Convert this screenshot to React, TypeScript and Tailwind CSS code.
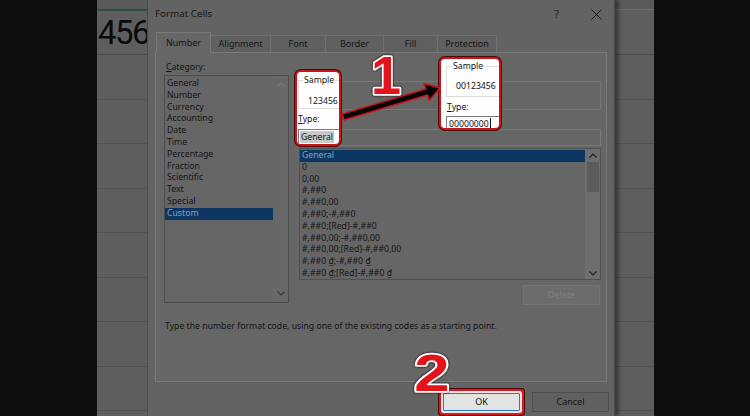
import React from "react";

const categories = [
  "General",
  "Number",
  "Currency",
  "Accounting",
  "Date",
  "Time",
  "Percentage",
  "Fraction",
  "Scientific",
  "Text",
  "Special",
  "Custom",
];

const formats = [
  "General",
  "0",
  "0,00",
  "#,##0",
  "#,##0,00",
  "#,##0;-#,##0",
  "#,##0;[Red]-#,##0",
  "#,##0,00;-#,##0,00",
  "#,##0,00;[Red]-#,##0,00",
  "#,##0 ₫;-#,##0 ₫",
  "#,##0 ₫;[Red]-#,##0 ₫",
];

const tabs = [
  { label: "Number", w: "w-[55px]" },
  { label: "Alignment", w: "w-[60px]" },
  { label: "Font", w: "w-[55px]" },
  { label: "Border", w: "w-[58px]" },
  { label: "Fill", w: "w-[54px]" },
  { label: "Protection", w: "w-[59px]" },
];

function ChevronUp({ color }: { color: string }) {
  return (
    <svg width="8" height="5" viewBox="0 0 8 5">
      <path d="M0.5 4.5 L4 1 L7.5 4.5" fill="none" stroke={color} strokeWidth="1.2" />
    </svg>
  );
}

function ChevronDown({ color }: { color: string }) {
  return (
    <svg width="8" height="5" viewBox="0 0 8 5">
      <path d="M0.5 0.5 L4 4 L7.5 0.5" fill="none" stroke={color} strokeWidth="1.2" />
    </svg>
  );
}

function Sheet() {
  return (
    <div className="flex flex-col">
      <div className="h-[9px] bg-[#5a5a5a]" />
      <div className="flex h-[46px] border-b border-[#4c4c4c]">
        <div className="w-[52px] border-t-2 border-[#2d4f3f] overflow-hidden">
          <div className="pl-[1px] pt-[5px] font-['Roboto',sans-serif] text-[33px] leading-none tracking-[-1.5px] text-[#0a0a0a]">
            456
          </div>
        </div>
        <div className="flex-1 border-t border-[#6c6c6c]" />
      </div>
      {Array.from({ length: 8 }).map((_, i) => (
        <div key={i} className="h-[44.5px] border-b border-[#515151]" />
      ))}
    </div>
  );
}

function Dialog() {
  return (
    <div className="absolute left-[50px] top-0 w-[468px] h-[416px] bg-[#636363] border-x border-[#4b4b4b] shadow-[4px_0_3px_rgba(0,0,0,0.35)] flex flex-col text-[8.7px] text-[#151515]">
      {/* title bar */}
      <div className="h-[28px] flex items-center pl-[7px] pr-[12px]">
        <span className="text-[9.8px]">Format Cells</span>
        <span className="ml-auto mr-[32px] text-[11px] text-[#1c1c1c]">?</span>
        <svg width="11" height="11" viewBox="0 0 11 11">
          <path d="M0.5 0.5 L10.5 10.5 M10.5 0.5 L0.5 10.5" stroke="#1a1a1a" strokeWidth="1" />
        </svg>
      </div>

      {/* tabs */}
      <div className="mt-[4px] ml-[8px] h-[20px] flex items-end">
        {tabs.map((t, i) =>
          i === 0 ? (
            <div
              key={t.label}
              className={`${t.w} h-[21px] -mb-px relative z-10 bg-[#666666] border-x border-t border-[#787878] flex items-center justify-center text-[9px]`}
            >
              {t.label}
            </div>
          ) : (
            <div
              key={t.label}
              className={`${t.w} h-[17px] bg-[#606060] border-t border-r border-[#707070] flex items-center justify-center text-[9px]`}
            >
              {t.label}
            </div>
          )
        )}
      </div>

      {/* panel */}
      <div className="mx-[7px] h-[330px] bg-[#666666] border border-[#787878] pt-[8px] pl-[8px] flex flex-col">
        <div className="flex">
          {/* category column */}
          <div className="w-[125px] flex flex-col">
            <div className="h-[14px] leading-[12px] pl-[2px]">
              <span className="underline">C</span>ategory:
            </div>
            <div className="h-[228px] border border-[#4d4d4d] flex">
              <div className="flex-1 pt-[2px]">
                {categories.map((c) => (
                  <div
                    key={c}
                    className={
                      c === "Custom"
                        ? "h-[11.8px] leading-[11.8px] pl-[2px] bg-[#0c3763] text-[#8ea0b8]"
                        : "h-[11.8px] leading-[11.8px] pl-[2px]"
                    }
                  >
                    {c}
                  </div>
                ))}
              </div>
              <div className="w-[15px] flex flex-col items-center justify-between py-[6px] bg-[#686868]">
                <ChevronUp color="#7a7a7a" />
                <ChevronDown color="#3a3a3a" />
              </div>
            </div>
          </div>

          {/* right column */}
          <div className="ml-[10px] w-[302px] flex flex-col">
            <div className="mt-[20px] h-[29px] border border-[#767676] relative">
              <span className="absolute left-[4px] -top-[7px] px-[1px] bg-[#666666] leading-[12px]">Sample</span>
            </div>
            <div className="mt-[4px] h-[12px] leading-[12px]">
              <span className="underline">T</span>ype:
            </div>
            <div className="mt-[3px] h-[17px] border border-[#7a7a7a]" />
            <div className="mt-[2px] h-[132px] border border-[#4f4f4f] flex">
              <div className="flex-1 pt-[1px]">
                {formats.map((f) => (
                  <div
                    key={f}
                    className={
                      f === "General"
                        ? "h-[11.8px] leading-[11.8px] pl-[2px] bg-[#0c3763] text-[#8ea0b8]"
                        : "h-[11.8px] leading-[11.8px] pl-[2px] whitespace-nowrap"
                    }
                  >
                    {f}
                  </div>
                ))}
              </div>
              <div className="w-[15px] bg-[#6e6e6e] flex flex-col items-center">
                <div className="h-[12px] flex items-center">
                  <ChevronUp color="#1e1e1e" />
                </div>
                <div className="w-[12px] h-[30px] mt-[1px] bg-[#5b5b5b]" />
                <div className="flex-1" />
                <div className="h-[12px] flex items-center">
                  <ChevronDown color="#1e1e1e" />
                </div>
              </div>
            </div>
            <div className="mt-[5px] self-end mr-[1px] w-[77px] h-[20px] bg-[#6c6c6c] border border-[#747474] flex items-center justify-center text-[#7f7f7f] text-[9px]">
              Delete
            </div>
          </div>
        </div>
        <div className="mt-[15px] pl-[1px] leading-[12px] whitespace-nowrap">
          Type the number format code, using one of the existing codes as a starting point.
        </div>
      </div>

      {/* buttons */}
      <div className="mt-[10px] flex justify-end gap-[12px] pr-[5px]">
        <div className="mt-[1px] w-[77px] h-[18px] bg-[#e3e3e3] border border-[#2d79c9] rounded-[1px] shadow-[0_0_0_2px_#f5e3e3,0_0_0_4px_#d21d27,0_0_0_5px_#4a0c0c] flex items-center justify-center text-[9px] text-[#111]">
          OK
        </div>
        <div className="w-[77px] h-[20px] bg-[#606060] border border-[#4f4f4f] flex items-center justify-center text-[9px]">
          Cancel
        </div>
      </div>
    </div>
  );
}

function Callouts() {
  return (
    <>
      {/* left callout */}
      <div className="absolute left-[295px] top-[70px] w-[46px] h-[76px] bg-white border-2 border-[#c8141d] rounded-[6px] shadow-[0_0_0_1px_#4a0a0a] overflow-hidden text-[8.7px] text-[#111]">
        <div className="pl-[1px] pt-[8px] flex flex-col w-[300px]">
          <div className="h-[29px] border border-[#dcdcdc] relative">
            <span className="absolute left-[4px] -top-[7px] px-[1px] bg-white leading-[12px]">Sample</span>
            <div className="pl-[9px] pt-[14px] leading-[12px]">123456</div>
          </div>
          <div className="mt-[4px] h-[12px] leading-[12px]">
            <span className="underline">T</span>ype:
          </div>
          <div className="mt-[4px] h-[16px] border border-[#7a7a7a] pl-[1px] pt-[1px]">
            <span className="bg-[#c9c9c9] leading-[12px] px-[1px]">General</span>
          </div>
        </div>
      </div>

      {/* right callout */}
      <div className="absolute left-[439px] top-[57px] w-[62px] h-[73px] bg-white border-2 border-[#c8141d] rounded-[6px] shadow-[0_0_0_1px_#4a0a0a] overflow-hidden text-[8.7px] text-[#111]">
        <div className="pl-[5px] pt-[7px] flex flex-col w-[300px]">
          <div className="h-[31px] border border-[#dcdcdc] relative">
            <span className="absolute left-[5px] -top-[7px] px-[1px] bg-white leading-[12px]">Sample</span>
            <div className="pl-[9px] pt-[13px] leading-[12px]">00123456</div>
          </div>
          <div className="mt-[4px] pl-[1px] h-[12px] leading-[12px]">
            <span className="underline">T</span>ype:
          </div>
          <div className="mt-[3px] h-[16px] border border-[#7a7a7a] pl-[2px] pt-[1px] flex">
            <span className="leading-[12px] border-r border-[#111] pr-[1px]">00000000</span>
          </div>
        </div>
      </div>

      {/* arrow */}
      <svg className="absolute left-[336px] top-[78px]" width="110" height="48" viewBox="336 78 110 48">
        <polygon
          points="342.1,114.1 425.7,89.1 424,83.4 440,88 429.2,100.6 427.5,94.9 343.9,119.9"
          fill="#050505"
          stroke="#c8141d"
          strokeWidth="1.6"
          strokeLinejoin="round"
        />
      </svg>

      {/* numeral 1 */}
      <svg className="absolute left-[361px] top-[40px] [filter:drop-shadow(0_0_1px_#000)]" width="50" height="68" viewBox="-8 -6 50 68">
        <text
          x="17"
          y="48"
          textAnchor="middle"
          fontFamily="Liberation Sans, Arial, sans-serif"
          fontWeight="700"
          fontSize="54"
          fill="#e3131b"
          stroke="#ffffff"
          strokeWidth="3.5"
          strokeLinejoin="round"
          paintOrder="stroke"
        >
          1
        </text>
      </svg>

      {/* numeral 2 */}
      <svg className="absolute left-[400px] top-[338px] [filter:drop-shadow(0_0_1px_#000)]" width="64" height="68" viewBox="-8 -8 64 68">
        <g transform="translate(24,0) scale(1.22,1) translate(-24,0)">
          <text
            x="24"
            y="45"
            textAnchor="middle"
            fontFamily="Liberation Sans, Arial, sans-serif"
            fontWeight="700"
            fontSize="52"
            fill="#e3131b"
            stroke="#ffffff"
            strokeWidth="3.5"
            strokeLinejoin="round"
            paintOrder="stroke"
          >
            2
          </text>
        </g>
      </svg>
    </>
  );
}

export default function App() {
  return (
    <div className="relative w-[750px] h-[416px] flex overflow-hidden bg-[#0e0e0e] font-['Noto_Sans',sans-serif]">
      <div className="w-[97px] shrink-0 bg-[#0e0e0e]" />
      <div className="relative w-[557px] shrink-0 h-full bg-[#5e5e5e] overflow-hidden">
        <Sheet />
        <Dialog />
      </div>
      <div className="flex-1 bg-[#0e0e0e]" />
      <Callouts />
    </div>
  );
}
